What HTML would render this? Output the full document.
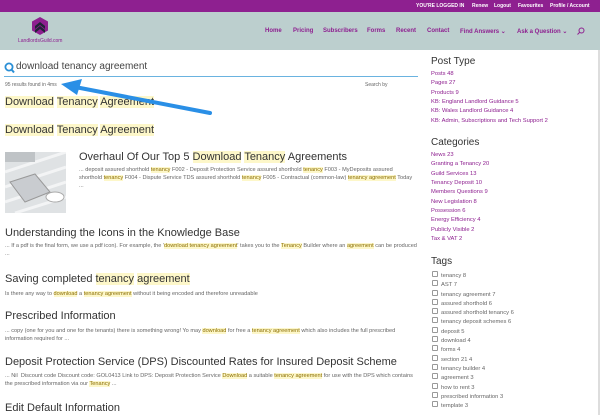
<!DOCTYPE html>
<html><head><meta charset="utf-8"><style>
*{margin:0;padding:0;box-sizing:border-box}
body{width:600px;height:415px;overflow:hidden;background:#fff;font-family:"Liberation Sans",sans-serif;position:relative;color:#333}
.a{position:absolute;white-space:nowrap}
.top{position:absolute;left:0;top:0;width:600px;height:12px;background:#8e2090;color:#fff;font-size:5px;font-weight:bold}
.hdr{position:absolute;left:0;top:12px;width:600px;height:38px;background:#bccfce}
.nav{font-size:6px;color:#8e2090;font-weight:bold;top:28px}
h2{position:absolute;font-weight:normal;font-size:11px;color:#333;white-space:nowrap}
.hl{background:#fdf7c9}
.s{position:absolute;font-size:5.6px;color:#666;line-height:8px;width:415px}
.s .hl{color:#8a6d00}
.side{position:absolute;left:431px;font-size:5.8px;color:#8e2090;line-height:9.35px}
.sh{position:absolute;left:431px;font-size:10px;color:#333}
.tags{position:absolute;left:432px;top:271px;font-size:5.8px;color:#666}
.tags div{height:9.3px;line-height:9.3px}
.tags div:before{content:"";display:inline-block;width:4px;height:4px;border:0.6px solid #999;border-radius:1px;margin-right:3px;vertical-align:0}
</style></head><body>
<div class="top"><span class="a" style="left:416px;top:3px">YOU'RE LOGGED IN</span><span class="a" style="left:472px;top:3px">Renew</span><span class="a" style="left:494px;top:3px">Logout</span><span class="a" style="left:518px;top:3px">Favourites</span><span class="a" style="left:550px;top:3px">Profile / Account</span></div>
<div class="hdr"></div>
<svg class="a" style="left:32px;top:17px" width="16" height="18" viewBox="0 0 16 18"><polygon points="8,0 16,4.5 16,13.5 8,18 0,13.5 0,4.5" fill="#8e2090"/><path d="M3,9 L8,5 L13,9 L13,12 L8,8 L3,12Z M3,13 L8,9 L13,13 L13,16 L8,12 L3,16Z" fill="#1f2436"/></svg>
<span class="a" style="left:18px;top:38px;font-size:5px;color:#8e2090">LandlordsGuild.com</span>
<span class="a nav" style="left:265px">Home</span>
<span class="a nav" style="left:293px">Pricing</span>
<span class="a nav" style="left:323px">Subscribers</span>
<span class="a nav" style="left:367px">Forms</span>
<span class="a nav" style="left:396px">Recent</span>
<span class="a nav" style="left:427px">Contact</span>
<span class="a nav" style="left:460px">Find Answers ⌄</span>
<span class="a nav" style="left:517px">Ask a Question ⌄</span>
<svg class="a" style="left:577px;top:27px" width="8" height="8"><circle cx="4.5" cy="3.5" r="2.5" fill="none" stroke="#8e2090" stroke-width="1"/><line x1="2.6" y1="5.4" x2="0.5" y2="7.5" stroke="#8e2090" stroke-width="1"/></svg>
<div class="a" style="left:598px;top:50px;width:2px;height:365px;background:#ddd"></div>
<svg class="a" style="left:4px;top:62px" width="11" height="12"><circle cx="5" cy="5" r="3.6" fill="none" stroke="#2a8fd6" stroke-width="1.8"/><line x1="7.5" y1="7.5" x2="10" y2="10.5" stroke="#2a8fd6" stroke-width="2"/></svg>
<span class="a" style="left:16px;top:61px;font-size:10px;color:#444">download tenancy agreement</span>
<div class="a" style="left:4px;top:76px;width:414px;height:1px;background:#6ab3e0"></div>
<span class="a" style="left:5px;top:82px;font-size:5px;color:#666">95 results found in 4ms</span>
<span class="a" style="left:365px;top:82px;font-size:5px;color:#666">Search by</span>
<h2 style="left:5px;top:96px"><span class="hl">Download</span> <span class="hl">Tenancy</span> <span class="hl">Agreement</span></h2>
<h2 style="left:5px;top:124px"><span class="hl">Download</span> <span class="hl">Tenancy</span> <span class="hl">Agreement</span></h2>
<svg class="a" style="left:5px;top:152px" width="61" height="61"><rect width="61" height="61" fill="#dfe2e4"/><path d="M0,20 L61,0 M0,35 L61,15 M0,50 L61,30 M10,61 L61,45" stroke="#f3f4f5" stroke-width="3"/><polygon points="5,30 30,22 45,40 20,50" fill="#c9ccd0" stroke="#999" stroke-width="1"/><ellipse cx="50" cy="45" rx="9" ry="5" fill="#fff" stroke="#aaa"/><rect x="0" y="0" width="30" height="10" fill="#bfc3c6"/></svg>
<h2 style="left:79px;top:151px">Overhaul Of Our Top 5 <span class="hl">Download</span> <span class="hl">Tenancy</span> Agreements</h2>
<div class="s" style="left:79px;top:166px;width:335px">... deposit assured shorthold <span class="hl">tenancy</span> F002 - Deposit Protection Service assured shorthold <span class="hl">tenancy</span> F003 - MyDeposits assured shorthold <span class="hl">tenancy</span> F004 - Dispute Service TDS assured shorthold <span class="hl">tenancy</span> F005 - Contractual (common-law) <span class="hl">tenancy agreement</span> Today ...</div>
<h2 style="left:5px;top:227px">Understanding the Icons in the Knowledge Base</h2>
<div class="s" style="left:5px;top:242px">... If a pdf is the final form, we use a pdf icon). For example, the '<span class="hl">download tenancy agreement</span>' takes you to the <span class="hl">Tenancy</span> Builder where an <span class="hl">agreement</span> can be produced ...</div>
<h2 style="left:5px;top:273px">Saving completed <span class="hl">tenancy</span> <span class="hl">agreement</span></h2>
<div class="s" style="left:5px;top:290px">Is there any way to <span class="hl">download</span> a <span class="hl">tenancy agreement</span> without it being encoded and therefore unreadable</div>
<h2 style="left:5px;top:310px">Prescribed Information</h2>
<div class="s" style="left:5px;top:327px">... copy (one for you and one for the tenants) there is something wrong! Yo may <span class="hl">download</span> for free a <span class="hl">tenancy agreement</span> which also includes the full prescribed information required for ...</div>
<h2 style="left:5px;top:356px">Deposit Protection Service (DPS) Discounted Rates for Insured Deposit Scheme</h2>
<div class="s" style="left:5px;top:372px">... Nil &nbsp;Discount code Discount code: GOL0413 Link to DPS: Deposit Protection Service <span class="hl">Download</span> a suitable <span class="hl">tenancy agreement</span> for use with the DPS which contains the prescribed information via our <span class="hl">Tenancy</span> ...</div>
<h2 style="left:5px;top:402px">Edit Default Information</h2>
<svg class="a" style="left:0;top:0" width="600" height="415"><path d="M210,113 L75,87" stroke="#2a8fe6" stroke-width="4" stroke-linecap="round"/><polygon points="61,84 82,79 77,95" fill="#2a8fe6"/></svg>
<div class="sh" style="top:56px">Post Type</div>
<div class="side" style="top:70px">Posts 48<br>Pages 27<br>Products 9<br>KB: England Landlord Guidance 5<br>KB: Wales Landlord Guidance 4<br>KB: Admin, Subscriptions and Tech Support 2</div>
<div class="sh" style="top:137px">Categories</div>
<div class="side" style="top:151px">News 23<br>Granting a Tenancy 20<br>Guild Services 13<br>Tenancy Deposit 10<br>Members Questions 9<br>New Legislation 8<br>Possession 6<br>Energy Efficiency 4<br>Publicly Visible 2<br>Tax &amp; VAT 2</div>
<div class="sh" style="top:256px">Tags</div>
<div class="tags"><div>tenancy 8</div><div>AST 7</div><div>tenancy agreement 7</div><div>assured shorthold 6</div><div>assured shorthold tenancy 6</div><div>tenancy deposit schemes 6</div><div>deposit 5</div><div>download 4</div><div>forms 4</div><div>section 21 4</div><div>tenancy builder 4</div><div>agreement 3</div><div>how to rent 3</div><div>prescribed information 3</div><div>template 3</div></div>
</body></html>
